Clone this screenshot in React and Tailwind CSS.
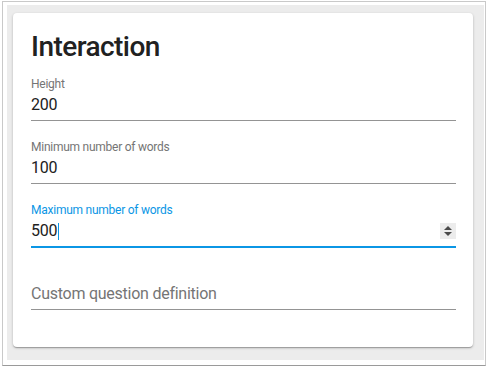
const fields = [
  { label: "Height", value: "200" },
  { label: "Minimum number of words", value: "100" },
];

function Field({ label, value }) {
  return (
    <div className="flex flex-col">
      <label className="text-[12px] leading-[14px] tracking-[-0.25px] text-[#757575]">{label}</label>
      <div className="mt-1 h-5 text-[16px] leading-5 tracking-[-0.25px] text-[#212121]">{value}</div>
      <div className="mt-[5px] h-px bg-[#949494]" />
    </div>
  );
}

function Spinner() {
  return (
    <div className="w-4 h-4 bg-[#ececec] flex items-center justify-center">
      <svg width="10" height="12" viewBox="0 0 10 12">
        <path d="M5 1 L9 5 L1 5 Z" fill="#4a4a4a" />
        <path d="M1 7 L9 7 L5 11 Z" fill="#4a4a4a" />
      </svg>
    </div>
  );
}

export default function App() {
  return (
    <div className="w-[491px] h-[368px] bg-white pt-[1px] pl-[2px]" style={{ fontFamily: "Roboto, 'Liberation Sans', sans-serif" }}>
      <div className="w-[484px] h-[365px] border border-[#c9c9c9] border-b-[#9a9a9a] bg-white pt-[3px] pl-[4px]">
        <div className="w-[477px] h-[355px] bg-[#ececec] pt-[8px] pl-[6px]">
          <div className="w-[460px] h-[334px] bg-white rounded-[4px] shadow-[0_1px_3px_rgba(0,0,0,0.2),0_1px_1px_rgba(0,0,0,0.14),0_2px_1px_-1px_rgba(0,0,0,0.12)] pt-[18px] pl-[18px] pr-[17px]">
            <h1 className="text-[28px] leading-8 font-medium text-[#212121] tracking-[-0.55px]">Interaction</h1>
            <div className="mt-[14px] flex flex-col gap-[19px]">
              {fields.map((f) => (
                <Field key={f.label} {...f} />
              ))}
              <div className="flex flex-col -mb-px">
                <label className="text-[12px] leading-[14px] tracking-[-0.25px] text-[#0b96e5]">Maximum number of words</label>
                <div className="mt-1 h-5 flex items-center justify-between">
                  <div className="flex items-center text-[16px] leading-5 tracking-[-0.25px] text-[#212121]">
                    500
                    <span className="ml-px w-px h-[17px] bg-[#0b96e5]" />
                  </div>
                  <Spinner />
                </div>
                <div className="mt-[5px] h-[2px] bg-[#0b96e5]" />
              </div>
              <div className="flex flex-col">
                <div className="h-[14px]" />
                <div className="mt-1 h-5 text-[16px] leading-5 tracking-[-0.25px] text-[#757575]">Custom question definition</div>
                <div className="mt-[5px] h-px bg-[#949494]" />
              </div>
            </div>
          </div>
        </div>
      </div>
    </div>
  );
}
